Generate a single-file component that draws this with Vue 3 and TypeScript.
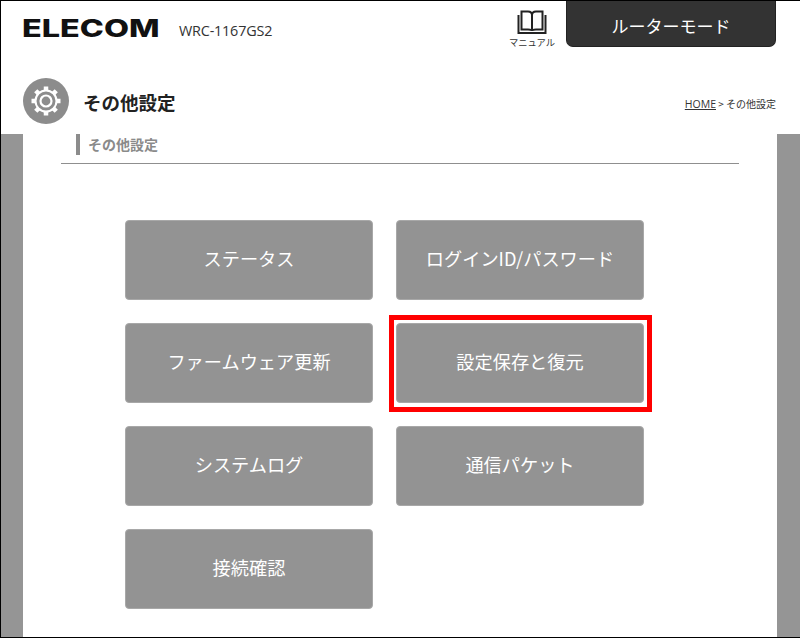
<script setup lang="ts">
const buttons: string[] = [
  'ステータス',
  'ログインID/パスワード',
  'ファームウェア更新',
  '設定保存と復元',
  'システムログ',
  '通信パケット',
  '接続確認',
]
const highlighted = '設定保存と復元'
</script>

<template>
  <div class="frame">
    <header class="top">
      <div class="brand">
        <span class="logo">ELECOM</span>
        <span class="model">WRC-1167GS2</span>
      </div>
      <div class="top-right">
        <div class="manual">
          <svg class="book" width="32" height="24" viewBox="0 0 32 24" fill="none" stroke="#222" stroke-width="2">
            <path d="M2.500 5V23H29.500V5" />
            <path d="M5.500 1.500H12C14.500 1.500 16 2.500 16 5V21C16 20 14.500 19.500 12 19.500H5.500Z" />
            <path d="M26.500 1.500H20C17.500 1.500 16 2.500 16 5V21C16 20 17.500 19.500 20 19.500H26.500Z" />
          </svg>
          <span class="manual-label">マニュアル</span>
        </div>
        <div class="mode">ルーターモード</div>
      </div>
    </header>

    <div class="title-row">
      <div class="title-left">
        <span class="gear-disc">
          <svg width="34" height="34" viewBox="0 0 34 34">
            <g fill="none" stroke="#fff">
              <circle cx="17" cy="17" r="10.500" stroke-width="2" />
              <circle cx="17" cy="17" r="5.500" stroke-width="2.200" />
              <g stroke-width="4.500">
                <path d="M17 2.500V7" />
                <path d="M17 27V31.500" />
                <path d="M2.500 17H7" />
                <path d="M27 17H31.500" />
                <path d="M6.750 6.750L9.900 9.900" />
                <path d="M24.100 24.100L27.250 27.250" />
                <path d="M6.750 27.250L9.900 24.100" />
                <path d="M24.100 9.900L27.250 6.750" />
              </g>
            </g>
          </svg>
        </span>
        <h1 class="page-title">その他設定</h1>
      </div>
      <div class="crumbs"><span class="home">HOME</span> &gt; その他設定</div>
    </div>

    <div class="stage">
      <main class="panel">
        <div class="section-wrap">
          <h2 class="section-title">その他設定</h2>
        </div>
        <div class="grid">
          <div v-for="b in buttons" :key="b" class="btn" :class="{ marked: b === highlighted }">
            {{ b }}
          </div>
        </div>
      </main>
    </div>
  </div>
</template>

<style>
html, body { margin: 0; background: #fff; }
</style>

<style scoped>
.frame {
  width: 800px;
  height: 638px;
  box-sizing: border-box;
  border: 1px solid #000;
  border-right-width: 0;
  display: flex;
  flex-direction: column;
  overflow: hidden;
  background: #fff;
  font-family: "Noto Sans CJK JP", "Noto Sans", sans-serif;
}
.top {
  height: 47px;
  flex: none;
  display: flex;
  justify-content: space-between;
  padding: 0 24px 0 22px;
}
.brand {
  display: flex;
  align-items: center;
  height: 56px;
}
.logo {
  width: 136px;
  margin-left: -1px;
  font-family: Inter, "Liberation Sans", sans-serif;
  font-weight: 800;
  font-size: 24px;
  line-height: 24px;
  color: #111;
  transform: scaleX(1.35);
  transform-origin: left center;
}
.model {
  margin: 3px 0 0 21px;
  font-family: "Open Sans", "Liberation Sans", sans-serif;
  font-size: 14.400px;
  color: #333;
  letter-spacing: -0.2px;
}
.top-right {
  display: flex;
  align-items: flex-start;
}
.manual {
  width: 46px;
  margin-right: 11px;
  margin-top: 9px;
  display: flex;
  flex-direction: column;
  align-items: center;
}
.book { display: block; }
.manual-label {
  font-size: 9.300px;
  line-height: 14px;
  color: #333;
  margin-top: 1px;
  white-space: nowrap;
}
.mode {
  width: 210px;
  height: 46px;
  box-sizing: border-box;
  background: #333;
  border-radius: 0 0 7px 7px;
  border: 1px solid #222;
  border-top: 0;
  color: #fff;
  font-size: 17px;
  line-height: 49px;
  text-align: center;
}
.title-row {
  height: 86px;
  flex: none;
  box-sizing: border-box;
  padding: 30px 24px 0 22px;
  display: flex;
  justify-content: space-between;
  align-items: flex-start;
}
.title-left {
  display: flex;
  align-items: center;
}
.gear-disc {
  width: 46px;
  height: 46px;
  border-radius: 50%;
  background: #8c8c8c;
  display: flex;
  align-items: center;
  justify-content: center;
}
.page-title {
  margin: 0 0 0 14px;
  padding-top: 3px;
  font-size: 18.500px;
  line-height: 43px;
  font-weight: 700;
  color: #222;
}
.crumbs {
  margin-top: 18px;
  font-size: 10px;
  line-height: 16px;
  color: #333;
}
.home {
  font-family: "Open Sans", sans-serif;
  font-size: 10.500px;
  text-decoration: underline;
}
.stage {
  flex: 1;
  min-height: 0;
  background: #959595;
  padding: 0 23px 0 22px;
}
.panel {
  height: 100%;
  background: #fff;
  box-sizing: border-box;
  padding: 0 38px;
}
.section-wrap {
  height: 30px;
  box-sizing: border-box;
  border-bottom: 1px solid #8f8f8f;
  padding: 0 15px;
}
.section-title {
  margin: 0;
  height: 21px;
  border-left: 4px solid #8c8c8c;
  padding-left: 8px;
  font-size: 14px;
  line-height: 20px;
  font-weight: 700;
  color: #8a8a8a;
}
.grid {
  margin: 56px 0 0 64px;
  display: grid;
  grid-template-columns: 248px 248px;
  grid-auto-rows: 80px;
  column-gap: 23px;
  row-gap: 23px;
}
.btn {
  position: relative;
  box-sizing: border-box;
  border: 1px solid #a8a8a8;
  border-radius: 4px;
  background: #939393;
  color: #fff;
  font-size: 18.200px;
  padding-bottom: 4px;
  display: flex;
  align-items: center;
  justify-content: center;
}
.marked::after {
  content: "";
  position: absolute;
  inset: -9px -9px -10px -8px;
  border: 5px solid #f00;
}
</style>
